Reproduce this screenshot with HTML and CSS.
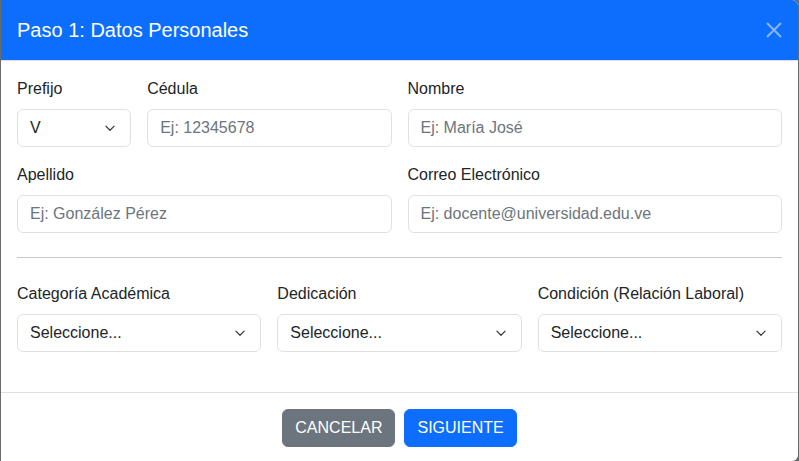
FILE: index.html
```html
<!DOCTYPE html>
<html lang="es">
<head>
<meta charset="utf-8">
<title>Paso 1: Datos Personales</title>
<link rel="stylesheet" href="styles.css">
</head>
<body>
<div class="modal">
  <div class="modal-header">
    <h5 class="modal-title">Paso 1: Datos Personales</h5>
    <button class="btn-close" type="button" aria-label="Cerrar">
      <svg width="16" height="16" viewBox="0 0 16 16"><path d="M1 1L15 15M15 1L1 15" stroke="#fff" stroke-width="2" fill="none"/></svg>
    </button>
  </div>
  <div class="modal-body">
    <div class="row">
      <div class="col-2">
        <label class="form-label">Prefijo</label>
        <select class="form-select"><option>V</option></select>
      </div>
      <div class="col-4">
        <label class="form-label">Cédula</label>
        <input class="form-control" placeholder="Ej: 12345678">
      </div>
      <div class="col-6">
        <label class="form-label">Nombre</label>
        <input class="form-control" placeholder="Ej: María José">
      </div>
      <div class="col-6">
        <label class="form-label">Apellido</label>
        <input class="form-control" placeholder="Ej: González Pérez">
      </div>
      <div class="col-6">
        <label class="form-label">Correo Electrónico</label>
        <input class="form-control" placeholder="Ej: docente@universidad.edu.ve">
      </div>
    </div>
    <hr class="divider">
    <div class="row row-last">
      <div class="col-4">
        <label class="form-label">Categoría Académica</label>
        <select class="form-select"><option>Seleccione...</option></select>
      </div>
      <div class="col-4">
        <label class="form-label">Dedicación</label>
        <select class="form-select"><option>Seleccione...</option></select>
      </div>
      <div class="col-4">
        <label class="form-label">Condición (Relación Laboral)</label>
        <select class="form-select"><option>Seleccione...</option></select>
      </div>
    </div>
  </div>
  <div class="modal-footer">
    <button class="btn btn-secondary" type="button">CANCELAR</button>
    <button class="btn btn-primary" type="button">SIGUIENTE</button>
  </div>
</div>
</body>
</html>
```
FILE: styles.css
```css
* { box-sizing: border-box; }
html, body { margin: 0; padding: 0; }
body {
  background: #6b6b6b;
  font-family: "Liberation Sans", Arial, sans-serif;
  font-size: 16px;
  line-height: 1.5;
  color: #212529;
  width: 799px;
  height: 461px;
  overflow: hidden;
}
.modal {
  margin-left: 1px;
  width: 797px;
  height: 461px;
  background: #fff;
  border-top-right-radius: 6px;
  border-bottom-right-radius: 6px;
  overflow: hidden;
  display: flex;
  flex-direction: column;
}
.modal-header {
  background: #0d6efd;
  color: #fff;
  height: 61px;
  padding: 15px 16px 15px 16px;
  border-bottom: 1px solid #dee2e6;
  display: flex;
  align-items: center;
  justify-content: space-between;
}
.modal-title {
  margin: 0;
  font-size: 20px;
  font-weight: 400;
  line-height: 30px;
}
.btn-close {
  background: none;
  border: 0;
  padding: 0;
  margin-right: 0;
  width: 16px;
  height: 16px;
  opacity: 0.5;
  display: flex;
}
.modal-body {
  padding: 16px 16px 16px 16px;
}
.row {
  display: grid;
  grid-template-columns: repeat(12, 1fr);
  column-gap: 16px;
  row-gap: 16px;
}
.row-last { margin-bottom: 24px; }
.col-2 { grid-column: span 2; }
.col-4 { grid-column: span 4; }
.col-6 { grid-column: span 6; }
.form-label {
  display: block;
  margin-bottom: 8px;
  line-height: 24px;
}
.form-control, .form-select {
  display: block;
  width: 100%;
  height: 38px;
  padding: 6px 12px;
  font-family: inherit;
  font-size: 16px;
  line-height: 24px;
  color: #212529;
  background-color: #fff;
  border: 1px solid #dee2e6;
  border-radius: 6px;
  outline: none;
}
.form-control::placeholder { color: #6c757d; opacity: 1; }
.form-select {
  appearance: none;
  -webkit-appearance: none;
  padding-right: 36px;
  background-image: url("data:image/svg+xml,%3csvg xmlns='http://www.w3.org/2000/svg' viewBox='0 0 16 16'%3e%3cpath fill='none' stroke='%23343a40' stroke-linecap='round' stroke-linejoin='round' stroke-width='1.6' d='m2.5 5.5 5.5 5.5 5.5-5.5'/%3e%3c/svg%3e");
  background-repeat: no-repeat;
  background-position: right 12px center;
  background-size: 16px 12px;
}
.divider {
  margin: 24px 0;
  border: 0;
  border-top: 1px solid #c8c8c8;
  height: 0;
}
.modal-footer {
  border-top: 1px solid #dee2e6;
  padding: 16px;
  display: flex;
  justify-content: center;
  gap: 9px;
}
.btn {
  font-family: inherit;
  font-size: 16px;
  line-height: 24px;
  padding: 6px 12px;
  border: 1px solid transparent;
  border-radius: 6px;
  color: #fff;
  height: 38px;
}
.btn-secondary { background: #6c757d; border-color: #6c757d; }
.btn-primary { background: #0d6efd; border-color: #0d6efd; }
```
